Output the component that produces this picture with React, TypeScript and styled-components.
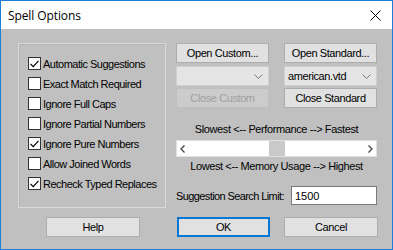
import styled, { createGlobalStyle } from "styled-components";

const GlobalStyle = createGlobalStyle`
  html, body {
    margin: 0;
    padding: 0;
    background: #ffffff;
  }
  * {
    box-sizing: border-box;
  }
`;

const FONT = `"Liberation Sans", Arial, sans-serif`;

const Window = styled.div`
  width: 393px;
  height: 250px;
  border: 1px solid #1c7ed6;
  display: flex;
  flex-direction: column;
  font-family: ${FONT};
  font-size: 11px;
  color: #000;
  overflow: hidden;
`;

const TitleBar = styled.div`
  height: 28px;
  background: #ffffff;
  display: flex;
  align-items: center;
  justify-content: space-between;
  padding: 0 8px 0 7px;
  font-family: "Open Sans", "Noto Sans", sans-serif;
  font-size: 12px;
  letter-spacing: -0.1px;
`;

const CloseIcon = styled.svg`
  width: 11px;
  height: 11px;
  margin-right: 3px;
`;

const Body = styled.div`
  flex: 1;
  background: #c0c0c0;
  padding: 14px 0 0 17px;
  display: flex;
  flex-direction: column;
`;

const MainRow = styled.div`
  display: flex;
  gap: 10px;
`;

const GroupBox = styled.div`
  width: 148px;
  height: 165px;
  border: 1px solid #d9d9d9;
  box-shadow: inset 1px 1px 0 #b4b4b4;
  padding: 13px 0 0 9px;
  display: flex;
  flex-direction: column;
  gap: 7px;
`;

const CheckRow = styled.label`
  display: flex;
  align-items: center;
  gap: 2px;
  height: 13px;
  white-space: nowrap;
  letter-spacing: -0.5px;
`;

const Box = styled.span`
  width: 13px;
  height: 13px;
  background: #ffffff;
  border: 1px solid #333333;
  display: flex;
  align-items: center;
  justify-content: center;
  flex-shrink: 0;
`;

const RightCol = styled.div`
  width: 201px;
  display: flex;
  flex-direction: column;
`;

const Pair = styled.div<{ $mt?: number }>`
  display: flex;
  justify-content: space-between;
  margin-top: ${(p) => p.$mt ?? 0}px;
`;

const Button = styled.div<{ $disabled?: boolean; $default?: boolean; $w?: number }>`
  width: ${(p) => p.$w ?? 93}px;
  height: 20px;
  display: flex;
  align-items: center;
  justify-content: center;
  background: ${(p) => (p.$disabled ? "#cccccc" : "#e1e1e1")};
  border: 1px solid ${(p) => (p.$default ? "#0078d7" : p.$disabled ? "#bfbfbf" : "#adadad")};
  box-shadow: ${(p) => (p.$default ? "inset 0 0 0 1px #0078d7" : "none")};
  color: ${(p) => (p.$disabled ? "#a0a0a0" : "#000")};
  letter-spacing: -0.4px;
  white-space: nowrap;
`;

const Select = styled.div`
  width: 93px;
  height: 20px;
  background: #e5e5e5;
  border: 1px solid #cfcfcf;
  display: flex;
  align-items: center;
  justify-content: space-between;
  padding: 0 5px 0 3px;
  letter-spacing: -0.4px;
`;

const Caption = styled.div<{ $mt: number }>`
  text-align: center;
  margin-top: ${(p) => p.$mt}px;
  letter-spacing: -0.4px;
  white-space: nowrap;
`;

const ScrollBar = styled.div`
  margin-top: 5px;
  height: 17px;
  background: #ffffff;
  border: 1px solid #e0e0e0;
  display: flex;
  align-items: center;
  justify-content: space-between;
  padding: 0 3px;
  position: relative;
`;

const Thumb = styled.div`
  position: absolute;
  left: 92px;
  top: 0;
  width: 16px;
  height: 15px;
  background: #c9c9c9;
`;

const LimitRow = styled.div`
  display: flex;
  align-items: center;
  justify-content: space-between;
  margin-top: 14px;
  letter-spacing: -0.6px;
  white-space: nowrap;
`;

const Input = styled.div`
  width: 86px;
  height: 19px;
  flex-shrink: 0;
  background: #ffffff;
  border: 1px solid #7a7a7a;
  display: flex;
  align-items: center;
  padding-left: 3px;
  letter-spacing: 0;
`;

const BottomRow = styled.div`
  display: flex;
  margin-top: 9px;
  padding-left: 28px;
  gap: 37px;
`;

const RightButtons = styled.div`
  display: flex;
  gap: 14px;
`;

function Check({ checked }: { checked: boolean }) {
  return (
    <Box>
      {checked && (
        <svg width="9" height="8" viewBox="0 0 9 8">
          <path d="M0.5 3.8 L3.2 6.6 L8.5 0.8" fill="none" stroke="#000" strokeWidth="1.2" />
        </svg>
      )}
    </Box>
  );
}

function Chevron() {
  return (
    <svg width="9" height="5" viewBox="0 0 9 5">
      <path d="M0.5 0.5 L4.5 4.5 L8.5 0.5" fill="none" stroke="#7a7a7a" strokeWidth="1" />
    </svg>
  );
}

const options: [string, boolean][] = [
  ["Automatic Suggestions", true],
  ["Exact Match Required", false],
  ["Ignore Full Caps", false],
  ["Ignore Partial Numbers", false],
  ["Ignore Pure Numbers", true],
  ["Allow Joined Words", false],
  ["Recheck Typed Replaces", true],
];

export default function App() {
  return (
    <>
      <GlobalStyle />
      <Window>
        <TitleBar>
          <span>Spell Options</span>
          <CloseIcon viewBox="0 0 11 11">
            <path d="M0.5 0.5 L10.5 10.5 M10.5 0.5 L0.5 10.5" stroke="#000" strokeWidth="1" />
          </CloseIcon>
        </TitleBar>
        <Body>
          <MainRow>
            <GroupBox>
              {options.map(([label, checked]) => (
                <CheckRow key={label}>
                  <Check checked={checked} />
                  {label}
                </CheckRow>
              ))}
            </GroupBox>
            <RightCol>
              <Pair>
                <Button>Open Custom...</Button>
                <Button>Open Standard...</Button>
              </Pair>
              <Pair $mt={3}>
                <Select>
                  <span />
                  <Chevron />
                </Select>
                <Select>
                  <span>american.vtd</span>
                  <Chevron />
                </Select>
              </Pair>
              <Pair $mt={2}>
                <Button $disabled>Close Custom</Button>
                <Button>Close Standard</Button>
              </Pair>
              <Caption $mt={15}>Slowest &lt;-- Performance --&gt; Fastest</Caption>
              <ScrollBar>
                <svg width="5" height="8" viewBox="0 0 5 8">
                  <path d="M4.5 0.5 L1 4 L4.5 7.5" fill="none" stroke="#444" strokeWidth="1.3" />
                </svg>
                <Thumb />
                <svg width="5" height="8" viewBox="0 0 5 8">
                  <path d="M0.5 0.5 L4 4 L0.5 7.5" fill="none" stroke="#444" strokeWidth="1.3" />
                </svg>
              </ScrollBar>
              <Caption $mt={3}>Lowest &lt;-- Memory Usage --&gt; Highest</Caption>
              <LimitRow>
                <span>Suggestion Search Limit:</span>
                <Input>1500</Input>
              </LimitRow>
            </RightCol>
          </MainRow>
          <BottomRow>
            <Button $w={94}>Help</Button>
            <RightButtons>
              <Button $default>OK</Button>
              <Button $w={94}>Cancel</Button>
            </RightButtons>
          </BottomRow>
        </Body>
      </Window>
    </>
  );
}
